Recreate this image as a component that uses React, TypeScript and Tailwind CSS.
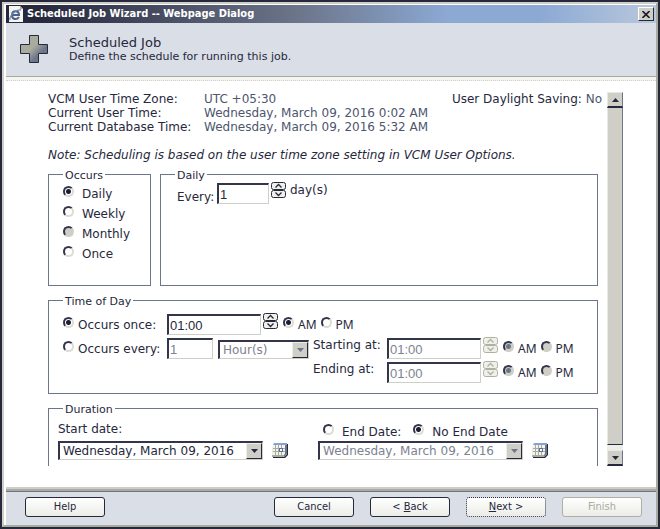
import { useState } from "react";
import type { ReactNode } from "react";

const sunken =
  "border-t-2 border-l-2 border-r border-b border-t-[#33364b] border-l-[#33364b] border-r-[#cfcfc7] border-b-[#cfcfc7]";

function Radio({ name, label, checked, disabled, onChange, gap = "gap-1", text = "" }: {
  name: string; label: string; checked: boolean; disabled?: boolean; onChange?: () => void; gap?: string; text?: string;
}) {
  return (
    <label className={`flex items-center ${gap}`}>
      <input
        type="radio"
        name={name}
        checked={checked}
        disabled={disabled}
        onChange={onChange ?? (() => {})}
        className="mb-1 size-[11px] shrink-0 appearance-none rounded-full border-2 border-t-[#33364b] border-l-[#33364b] border-r-[#dcdcd6] border-b-[#dcdcd6] bg-white bg-origin-border checked:bg-[radial-gradient(circle,#1c1e30_2px,transparent_3px)] disabled:border-r-[#cfcfc7] disabled:border-b-[#cfcfc7] disabled:bg-[#cfcfc7] disabled:checked:bg-[radial-gradient(circle,#6c758a_2px,transparent_3px)]"
      />
      <span className={text}>{label}</span>
    </label>
  );
}

function Spinner({ disabled, label }: { disabled?: boolean; label: string }) {
  const line = disabled ? "#b0b0a2" : "#26283c";
  return (
    <span className="flex h-4 w-[15px] shrink-0 flex-col">
      {["M4.5 5.5 7.5 2.5 10.5 5.5", "M4.5 2.5 7.5 5.5 10.5 2.5"].map((d, i) => (
        <button key={d} type="button" disabled={disabled} aria-label={`${i ? "Decrease" : "Increase"} ${label}`} className="h-2">
          <svg width="15" height="8" viewBox="0 0 15 8" fill="none" stroke={line} className="block">
            <rect x="0.5" y="0.5" width="14" height="7" rx="2" fill="#f0f0ea" />
            <path d={d} strokeWidth="1.3" />
          </svg>
        </button>
      ))}
    </span>
  );
}

function TextBox({ value, label, width, disabled }: { value: string; label: string; width: string; disabled?: boolean }) {
  return (
    <input
      type="text"
      aria-label={label}
      defaultValue={value}
      disabled={disabled}
      className={`${sunken} ${width} h-[21px] shrink-0 bg-white px-px pt-px font-['Liberation_Sans',Arial,sans-serif] text-[13px] text-[#26283c] disabled:text-[#7c8290]`}
    />
  );
}

function Dropdown({ value, label, width, disabled }: { value: string; label: string; width: string; disabled?: boolean }) {
  return (
    <span className={`relative flex h-[19px] shrink-0 ${width}`}>
      <select
        aria-label={label}
        disabled={disabled}
        className={`${sunken} w-full appearance-none bg-white pl-[3px] text-[12px] leading-4 text-[#26283c] opacity-100 disabled:text-[#7c8290]`}
      >
        <option>{value}</option>
      </select>
      <span className="pointer-events-none absolute top-0.5 right-px bottom-px flex w-4 items-center justify-center border border-t-[#ededea] border-l-[#ededea] border-r-[#26283c] border-b-[#26283c] bg-[#cfcfc7]">
        <svg width="7" height="4" viewBox="0 0 7 4" fill={disabled ? "#6c758a" : "#26283c"}>
          <path d="M0 0h7L3.5 4z" />
        </svg>
      </span>
    </span>
  );
}

function CalendarButton({ label, disabled }: { label: string; disabled?: boolean }) {
  return (
    <button type="button" aria-label={label} disabled={disabled}>
      <svg width="16" height="16" viewBox="0 0 16 16" className="block">
        <path d="M15 1h1v11l-3 3H1v-1h11l3-3z" fill="#26283c" />
        <path d="M1 2h14v9l-3 3H0z" fill="#a9ab9c" />
        <path d="M13 2h2v9l-3 3v-2l1-1z" fill="#6c758a" />
        <path d="M1 2h12v8l-1 2H0z" fill="#f4f4ef" />
        <path d="M2 0h13v2H1z" fill="#84a3d4" />
        <path d="M3.5 2v10M6.5 2v10M9.5 2v10M1 5.5h12M1 8.5h12" stroke="#a9ab9c" />
        <rect x="7.5" y="5.5" width="3" height="3" fill="#fff" stroke="#5a7099" />
      </svg>
    </button>
  );
}

function Group({ title, className, children }: { title: string; className: string; children: ReactNode }) {
  return (
    <fieldset className={`min-w-0 border border-[#6c758a] ${className}`}>
      <legend className="ml-3.5 px-0.5 pt-1 text-[11px] leading-[10px]">{title}</legend>
      {children}
    </fieldset>
  );
}

function Meridiem({ name, disabled }: { name: string; disabled?: boolean }) {
  const [half, setHalf] = useState("AM");
  return (
    <div className="ml-[5px] flex gap-1">
      {["AM", "PM"].map((h) => (
        <Radio key={h} name={name} label={h} text="font-['Noto_Sans',sans-serif] text-[12px]" checked={half === h} disabled={disabled} onChange={() => setHalf(h)} />
      ))}
    </div>
  );
}

function RangeTime({ label }: { label: string }) {
  return (
    <div className="flex h-[21px] items-start">
      <span className="w-[74px]">{label}</span>
      <TextBox value="01:00" label={label} width="w-[94px]" disabled />
      <span className="ml-0.5 -mt-px"><Spinner disabled label={label} /></span>
      <div className="pt-[3px]"><Meridiem name={label} disabled /></div>
    </div>
  );
}

function WizardButton({ children, look = "border-solid border-[#26283c] text-[#26283c]", disabled }: {
  children: ReactNode; look?: string; disabled?: boolean;
}) {
  return (
    <button
      type="button"
      disabled={disabled}
      className={`h-5 w-20 rounded-[3px] border bg-linear-to-b from-white to-[#ecece7] font-['DejaVu_Sans_Condensed','DejaVu_Sans',sans-serif] text-[11px] leading-4 ${look}`}
    >
      {children}
    </button>
  );
}

function ScrollArrow({ label, d }: { label: string; d: string }) {
  return (
    <button type="button" aria-label={label} className="flex h-4 w-full shrink-0 items-center justify-center border-t border-l border-r border-b-2 border-t-[#e8e8e4] border-l-[#e8e8e4] border-r-[#6c758a] border-b-[#26283c] bg-[#cfcfc7]">
      <svg width="7" height="4" viewBox="0 0 7 4" fill="#26283c"><path d={d} /></svg>
    </button>
  );
}

export default function App() {
  const [occurs, setOccurs] = useState("Daily");
  const [mode, setMode] = useState("once");
  const [end, setEnd] = useState("none");

  return (
    <div className="h-screen border-2 border-[#26283c] bg-white font-['DejaVu_Sans',Verdana,sans-serif] text-[12px] leading-[14px] text-[#26283c]">
      <div className="flex h-full flex-col border-2 border-t-[#cfcfc7] border-l-[#cfcfc7] border-r-[#a9ab9c] border-b-[#a9ab9c] pt-px pl-0.5">
        <div className="flex h-[18px] shrink-0 items-center bg-[linear-gradient(90deg,#26283c_5%,#6c758a_45%,#8ca9d4_68%,#8ca9d4_82%,#b9c8dd_100%)] pr-0.5 pl-0.5">
          <svg width="16" height="16" viewBox="0 0 16 16" className="shrink-0">
            <path d="M1 0h11l3 3v13H1z" fill="#f4f4f1" />
            <path d="M12 0v3h3z" fill="#a9ab9c" />
            <path d="M4 9h7c0-5-7-5-7 0s5 5 7 2" fill="none" stroke="#4d5f86" strokeWidth="2" />
            <path d="M2 14C1 10 8 3 13 4" fill="none" stroke="#6c86b4" strokeWidth="1.3" />
          </svg>
          <h1 className="ml-[3px] flex-1 font-['DejaVu_Sans_Condensed','DejaVu_Sans',sans-serif] text-[11px] font-bold text-white">
            Scheduled Job Wizard -- Webpage Dialog
          </h1>
          <button type="button" aria-label="Close" className="flex h-3.5 w-4 items-center justify-center border border-t-white border-l-white border-r-[#26283c] border-b-[#26283c] bg-[#cfcfc7]">
            <svg width="8" height="7" viewBox="0 0 8 7" stroke="#1c1e30" strokeWidth="1.6"><path d="M.5 0l7 7M7.5 0l-7 7" /></svg>
          </button>
        </div>

        <header className="flex h-[54px] shrink-0 items-start gap-[21px] border-b border-[#a9ab9c] bg-[#dadee6] pt-3 pl-3.5">
          <svg width="28" height="28" viewBox="0 0 28 28">
            <defs>
              <linearGradient id="plus" x1="0" y1="0" x2="1" y2="1">
                <stop offset="0.45" stopColor="#a9ab9c" />
                <stop offset="0.7" stopColor="#6c758a" />
              </linearGradient>
            </defs>
            <path d="M9.5.5h9v9h9v9h-9v9h-9v-9h-9v-9h9z" fill="url(#plus)" stroke="#26283c" />
          </svg>
          <div>
            <h2 className="text-[13px] leading-[15px]">Scheduled Job</h2>
            <p className="text-[11px]">Define the schedule for running this job.</p>
          </div>
        </header>
        <div className="h-1 shrink-0 border-b border-dotted border-[#cfcfc7] bg-[#f4f4f1]" />

        <main className="flex min-h-0 flex-1 pt-[11px] pr-[33px] pb-[21px] pl-[42px]">
          <div className="min-w-0 flex-1 overflow-hidden pr-[9px]">
            <div className="flex justify-between">
              <dl className="grid grid-cols-[156px_auto]">
                <dt>VCM User Time Zone:</dt>
                <dd className="text-[#4d566e]">UTC +05:30</dd>
                <dt>Current User Time:</dt>
                <dd className="whitespace-nowrap text-[#4d566e]">Wednesday, March 09, 2016 0:02 AM</dd>
                <dt className="whitespace-nowrap">Current Database Time:</dt>
                <dd className="whitespace-nowrap text-[#4d566e]">Wednesday, March 09, 2016 5:32 AM</dd>
              </dl>
              <p className="-mr-1 shrink-0">User Daylight Saving: <span className="text-[#4d566e]">No</span></p>
            </div>
            <p className="mt-3.5 italic">Note: Scheduling is based on the user time zone setting in VCM User Options.</p>

            <div className="mt-[5px] flex gap-[9px]">
              <Group title="Occurs" className="h-[119px] w-[103px] shrink-0">
                <div className="flex flex-col gap-[5px] pt-[5px] pl-3.5">
                  {["Daily", "Weekly", "Monthly", "Once"].map((o) => (
                    <Radio key={o} name="occurs" label={o} gap="gap-2" checked={occurs === o} disabled={o === "Monthly"} onChange={() => setOccurs(o)} />
                  ))}
                </div>
              </Group>
              <Group title="Daily" className="h-[119px] flex-1">
                <div className="flex items-start pt-0.5 pl-4">
                  <span className="w-10 pt-[7px]">Every:</span>
                  <TextBox value="1" label="Every" width="w-[52px]" />
                  <span className="-mt-px ml-0.5"><Spinner label="days" /></span>
                  <span className="ml-1">day(s)</span>
                </div>
              </Group>
            </div>

            <Group title="Time of Day" className="mt-[7px] h-[101px]">
              <div className="flex flex-col gap-[3px] pt-[7px] pl-3.5">
                <div className="flex h-[21px] items-start">
                  <div className="w-[104px] pt-[3px]">
                    <Radio name="mode" label="Occurs once:" checked={mode === "once"} onChange={() => setMode("once")} />
                  </div>
                  <TextBox value="01:00" label="Time of day" width="w-[94px]" />
                  <span className="-mt-px ml-0.5"><Spinner label="time of day" /></span>
                  <div className="pt-[3px]"><Meridiem name="once-half" /></div>
                </div>
                <div className="flex">
                  <div className="flex w-[250px] shrink-0 items-start">
                    <div className="w-[104px] pt-[3px]">
                      <Radio name="mode" label="Occurs every:" checked={mode === "every"} onChange={() => setMode("every")} />
                    </div>
                    <TextBox value="1" label="Interval" width="w-[46px]" disabled />
                    <div className="ml-[5px] pt-0.5"><Dropdown value="Hour(s)" label="Interval unit" width="w-[91px]" disabled /></div>
                  </div>
                  <div className="flex flex-col gap-[3px]">
                    <RangeTime label="Starting at:" />
                    <RangeTime label="Ending at:" />
                  </div>
                </div>
              </div>
            </Group>

            <Group title="Duration" className="mt-[7px] h-[101px]">
              <div className="grid grid-cols-[260px_auto] gap-y-0.5 pt-[7px] pl-[9px]">
                <span>Start date:</span>
                <div className="mt-0.5 ml-[5px] flex gap-3">
                  <Radio name="end" label="End Date:" gap="gap-2" checked={end === "date"} onChange={() => setEnd("date")} />
                  <Radio name="end" label="No End Date" gap="gap-2" checked={end === "none"} onChange={() => setEnd("none")} />
                </div>
                <div className="flex items-center gap-[9px]">
                  <Dropdown value="Wednesday, March 09, 2016" label="Start date" width="w-[205px]" />
                  <CalendarButton label="Pick start date" />
                </div>
                <div className="flex items-center gap-[9px]">
                  <Dropdown value="Wednesday, March 09, 2016" label="End date" width="w-[205px]" disabled />
                  <CalendarButton label="Pick end date" disabled />
                </div>
              </div>
            </Group>
          </div>
          <div className="flex w-4 shrink-0 flex-col bg-[#ededea]">
            <ScrollArrow label="Scroll up" d="M0 4h7L3.5 0z" />
            <div className="flex-1 border-r border-b border-l border-r-[#6c758a] border-b-[#26283c] border-l-[#e8e8e4] bg-[#cfcfc7]" />
            <div className="h-[5px] shrink-0" />
            <ScrollArrow label="Scroll down" d="M0 0h7L3.5 4z" />
          </div>
        </main>

        <div className="h-0.5 shrink-0 bg-[#cfcfc7]" />
        <div className="h-0.5 shrink-0 bg-[#a9ab9c]" />
        <footer className="flex shrink-0 gap-4 border-t border-[#6c758a] bg-[#dadee6] pt-[5px] pr-3.5 pb-2 pl-[19px]">
          <WizardButton>Help</WizardButton>
          <div className="flex-1" />
          <WizardButton>Cancel</WizardButton>
          <WizardButton>&lt; <u>B</u>ack</WizardButton>
          <WizardButton look="border-dotted border-[#26283c] text-[#26283c]"><u>N</u>ext &gt;</WizardButton>
          <WizardButton disabled look="border-solid border-[#b0b0a2] text-[#a9ab9c]">Finish</WizardButton>
        </footer>
      </div>
    </div>
  );
}
